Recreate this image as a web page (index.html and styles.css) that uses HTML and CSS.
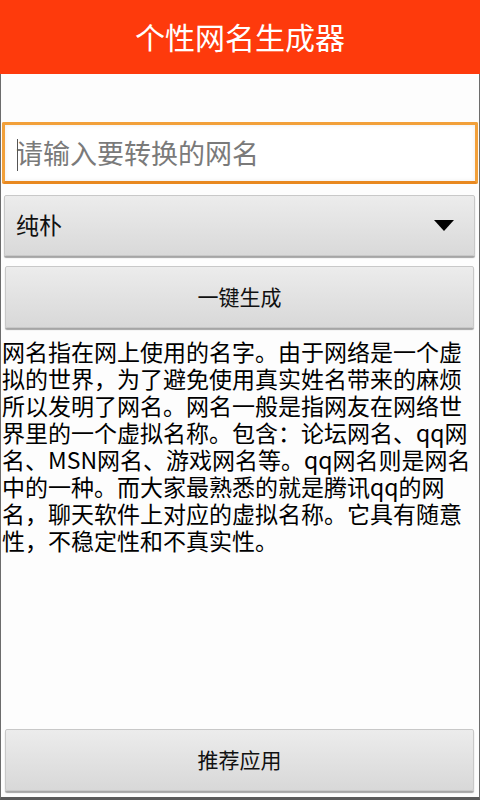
FILE: index.html
```html
<!DOCTYPE html>
<html lang="zh-CN">
<head>
<meta charset="utf-8">
<title>个性网名生成器</title>
<link rel="stylesheet" href="styles.css">
</head>
<body>
<div class="app">
  <header class="titlebar">个性网名生成器</header>
  <main class="content">
    <div class="input-wrap">
      <span class="caret"></span>
      <input class="name-input" type="text" placeholder="请输入要转换的网名">
    </div>
    <div class="spinner">
      <span class="spinner-text">纯朴</span>
      <svg class="arrow" width="20" height="12" viewBox="0 0 20 12"><polygon points="0,0 20,0 10,11" fill="#000"/></svg>
    </div>
    <button class="btn btn-gen">一键生成</button>
    <p class="desc">网名指在网上使用的名字。由于网络是一个虚拟的世界，为了避免使用真实姓名带来的麻烦所以发明了网名。网名一般是指网友在网络世界里的一个虚拟名称。包含：论坛网名、qq网名、MSN网名、游戏网名等。qq网名则是网名中的一种。而大家最熟悉的就是腾讯qq的网名，聊天软件上对应的虚拟名称。它具有随意性，不稳定性和不真实性。</p>
    <div class="spacer"></div>
    <button class="btn btn-rec">推荐应用</button>
  </main>
</div>
</body>
</html>
```

FILE: styles.css
```css
html, body {
  margin: 0;
  padding: 0;
  height: 100%;
}
body {
  font-family: "Noto Sans CJK SC", "Noto Sans", sans-serif;
  background: #fdfdfd;
}
.app {
  width: 480px;
  height: 800px;
  display: flex;
  flex-direction: column;
  box-sizing: border-box;
}
.titlebar {
  height: 74px;
  background: #fe3a0c;
  color: #fff;
  font-size: 30px;
  display: flex;
  align-items: center;
  justify-content: center;
  line-height: 1;
  padding-bottom: 2px;
  box-sizing: border-box;
}
.content {
  flex: 1;
  display: flex;
  flex-direction: column;
  border-left: 1px solid #6c6c6c;
  border-right: 1px solid #6c6c6c;
  border-bottom: 3px solid #5a5a5a;
  background: #fdfdfd;
  padding-top: 48px;
}
.input-wrap {
  position: relative;
  margin: 0 1px 0 1px;
  height: 62px;
  box-sizing: border-box;
  border: 3px solid #f2a03a;
  border-bottom-color: #e8881f;
  border-radius: 2px;
  background: #fff;
  box-shadow: inset 0 0 4px rgba(0,0,0,0.08);
}
.name-input {
  width: 100%;
  height: 100%;
  box-sizing: border-box;
  border: none;
  outline: none;
  background: transparent;
  padding: 0 0 2px 11px;
  font-family: "Noto Sans CJK SC", sans-serif;
  font-size: 27px;
  color: #333;
}
.name-input::placeholder {
  color: #7a7a7a;
}
.caret {
  position: absolute;
  left: 12px;
  top: 14px;
  width: 1px;
  height: 32px;
  background: #555;
}
.spinner {
  margin: 11px 4px 0 3px;
  height: 61px;
  box-sizing: border-box;
  border: 1px solid #c8c8c8;
  border-radius: 2px;
  background: linear-gradient(#ececec, #d9d9d9);
  box-shadow: 0 2px 1px rgba(0,0,0,0.35);
  display: flex;
  align-items: center;
  padding: 0 20px 0 11px;
  justify-content: space-between;
}
.spinner-text {
  font-size: 23px;
  color: #111;
  padding-bottom: 4px;
}
.arrow {
  display: block;
}
.btn {
  display: block;
  height: 62px;
  box-sizing: border-box;
  border: 1px solid #c8c8c8;
  border-radius: 2px;
  background: linear-gradient(#ececec, #d8d8d8);
  box-shadow: 0 2px 1px rgba(0,0,0,0.35);
  font-family: "Noto Sans CJK SC", sans-serif;
  font-size: 21px;
  color: #111;
  padding: 0 0 2px 0;
}
.btn-gen {
  margin: 10px 5px 0 4px;
}
.desc {
  margin: 10px 0 0 1px;
  font-size: 23px;
  line-height: 27px;
  color: #000;
}
.spacer {
  flex: 1;
}
.btn-rec {
  margin: 0 5px 6px 4px;
}
```
